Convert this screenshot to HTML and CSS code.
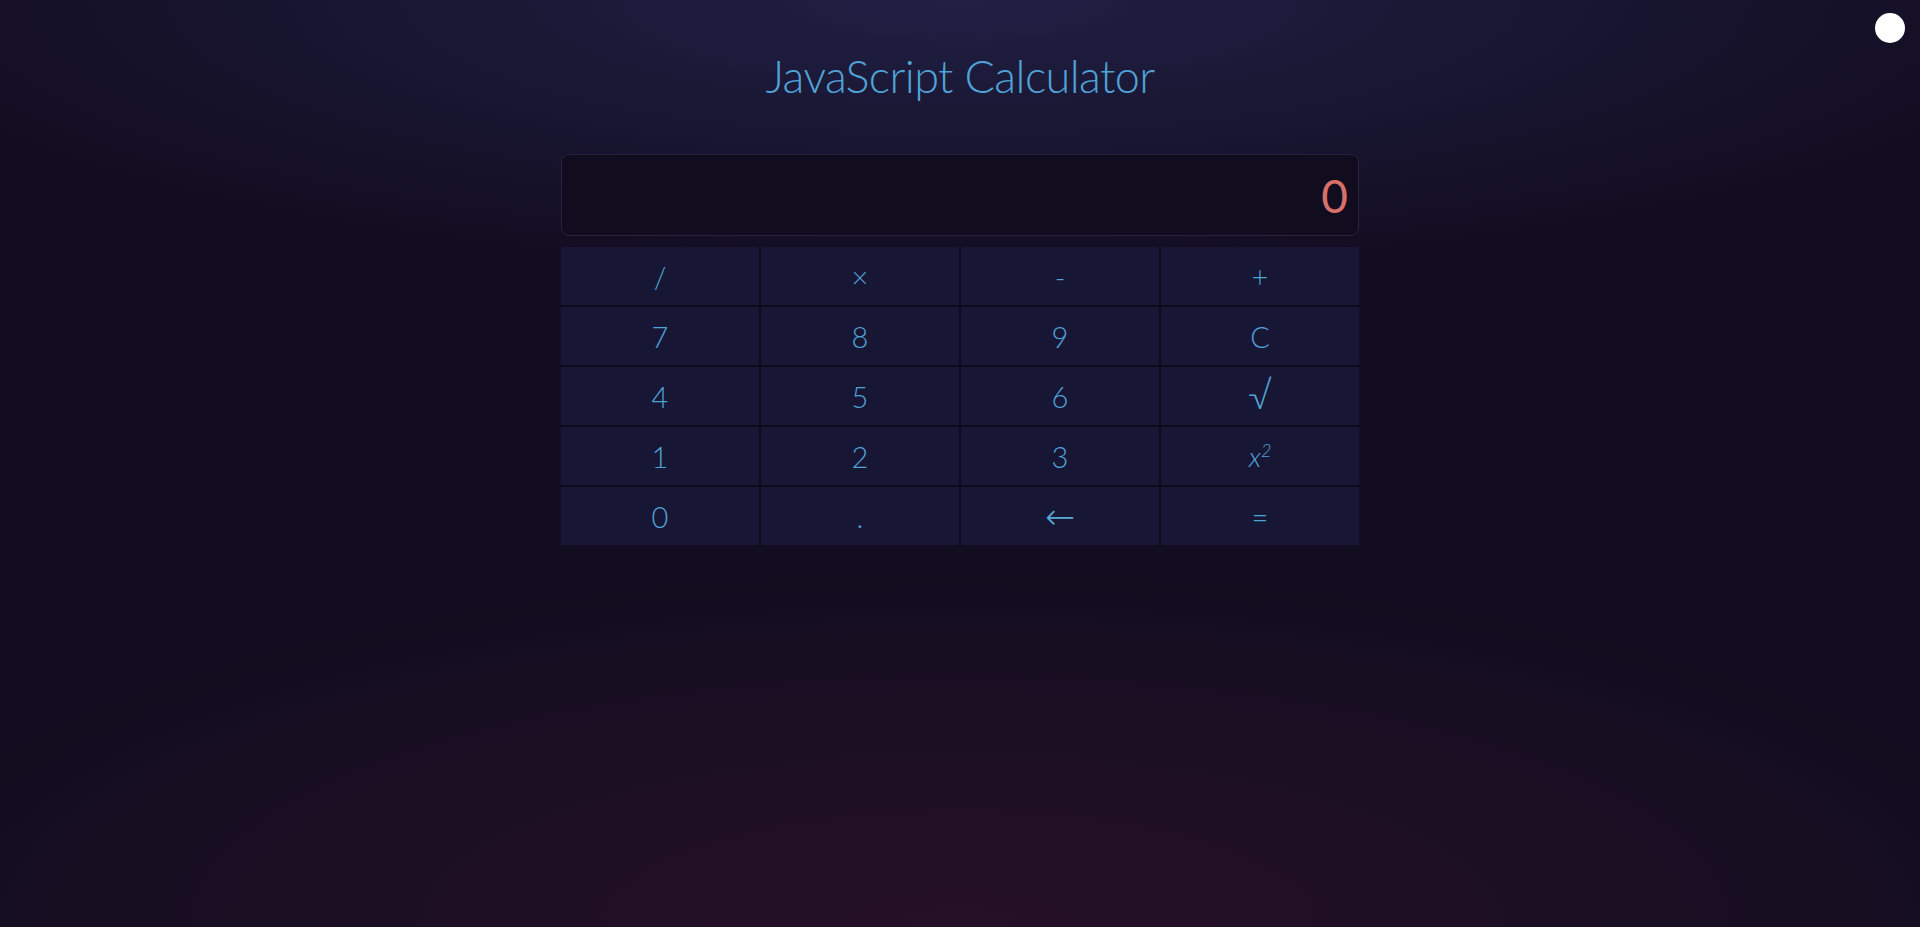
FILE: index.html
```html
<!DOCTYPE html>
<html lang="en">
<head>
<meta charset="utf-8">
<title>JavaScript Calculator</title>
<link rel="stylesheet" href="styles.css">
</head>
<body>
<div class="toggle"></div>
<main class="app">
  <h1 class="title">JavaScript Calculator</h1>
  <div class="calc">
    <div class="display">0</div>
    <div class="keys">
      <button class="key">/</button>
      <button class="key">×</button>
      <button class="key">-</button>
      <button class="key">+</button>
      <button class="key">7</button>
      <button class="key">8</button>
      <button class="key">9</button>
      <button class="key">C</button>
      <button class="key">4</button>
      <button class="key">5</button>
      <button class="key">6</button>
      <button class="key sqrt">√</button>
      <button class="key">1</button>
      <button class="key">2</button>
      <button class="key">3</button>
      <button class="key"><i class="var">x</i><sup class="sq">2</sup></button>
      <button class="key">0</button>
      <button class="key">.</button>
      <button class="key arrow">←</button>
      <button class="key">=</button>
    </div>
  </div>
</main>
</body>
</html>
```
FILE: styles.css
```css
html, body {
  margin: 0;
  height: 100%;
}
body {
  background:
    radial-gradient(ellipse 60% 30% at 50% 0%, rgba(34, 33, 72, 0.9), rgba(34, 33, 72, 0) 100%),
    radial-gradient(ellipse 60% 40% at 50% 100%, rgba(40, 16, 40, 0.9), rgba(40, 16, 40, 0) 100%),
    #120d20;
  font-family: "Lato", "Open Sans", sans-serif;
  font-weight: 300;
  color: #50a3d6;
  overflow: hidden;
}
.toggle {
  position: absolute;
  top: 13px;
  right: 15px;
  width: 30px;
  height: 30px;
  border-radius: 50%;
  background: #ffffff;
}
.app {
  display: flex;
  flex-direction: column;
  align-items: center;
  padding-top: 46px;
}
.title {
  margin: 0;
  font-size: 45px;
  font-weight: 300;
  line-height: 60px;
  color: #50a3d6;
  letter-spacing: -0.6px;
}
.calc {
  width: 798px;
  margin-top: 48px;
  display: flex;
  flex-direction: column;
  gap: 11px;
}
.display {
  height: 80px;
  box-sizing: content-box;
  border: 1px solid #27223f;
  border-radius: 8px;
  background: #110c1e;
  color: #d8706a;
  font-size: 46px;
  font-weight: 400;
  display: flex;
  align-items: center;
  justify-content: flex-end;
  padding-right: 10px;
}
.keys {
  display: grid;
  grid-template-columns: repeat(4, 1fr);
  grid-auto-rows: 58px;
  gap: 2px;
  background: #100b1c;
}
.key {
  border: 0;
  margin: 0;
  padding: 0;
  background: #181635;
  color: #50a3d6;
  font-family: "Lato", "Open Sans", sans-serif;
  font-weight: 300;
  font-size: 29px;
  display: flex;
  align-items: center;
  justify-content: center;
}
.sqrt {
  font-size: 38px;
  font-weight: 300;
  padding-bottom: 4px;
}
.arrow {
  font-size: 36px;
  font-family: "DejaVu Sans", sans-serif;
  font-weight: 200;
  color: #5aa9d6;
}
.var {
  font-style: italic;
  font-size: 28px;
}
.sq {
  font-size: 18px;
  position: relative;
  top: -6px;
  font-style: italic;
  vertical-align: top;
}
```
